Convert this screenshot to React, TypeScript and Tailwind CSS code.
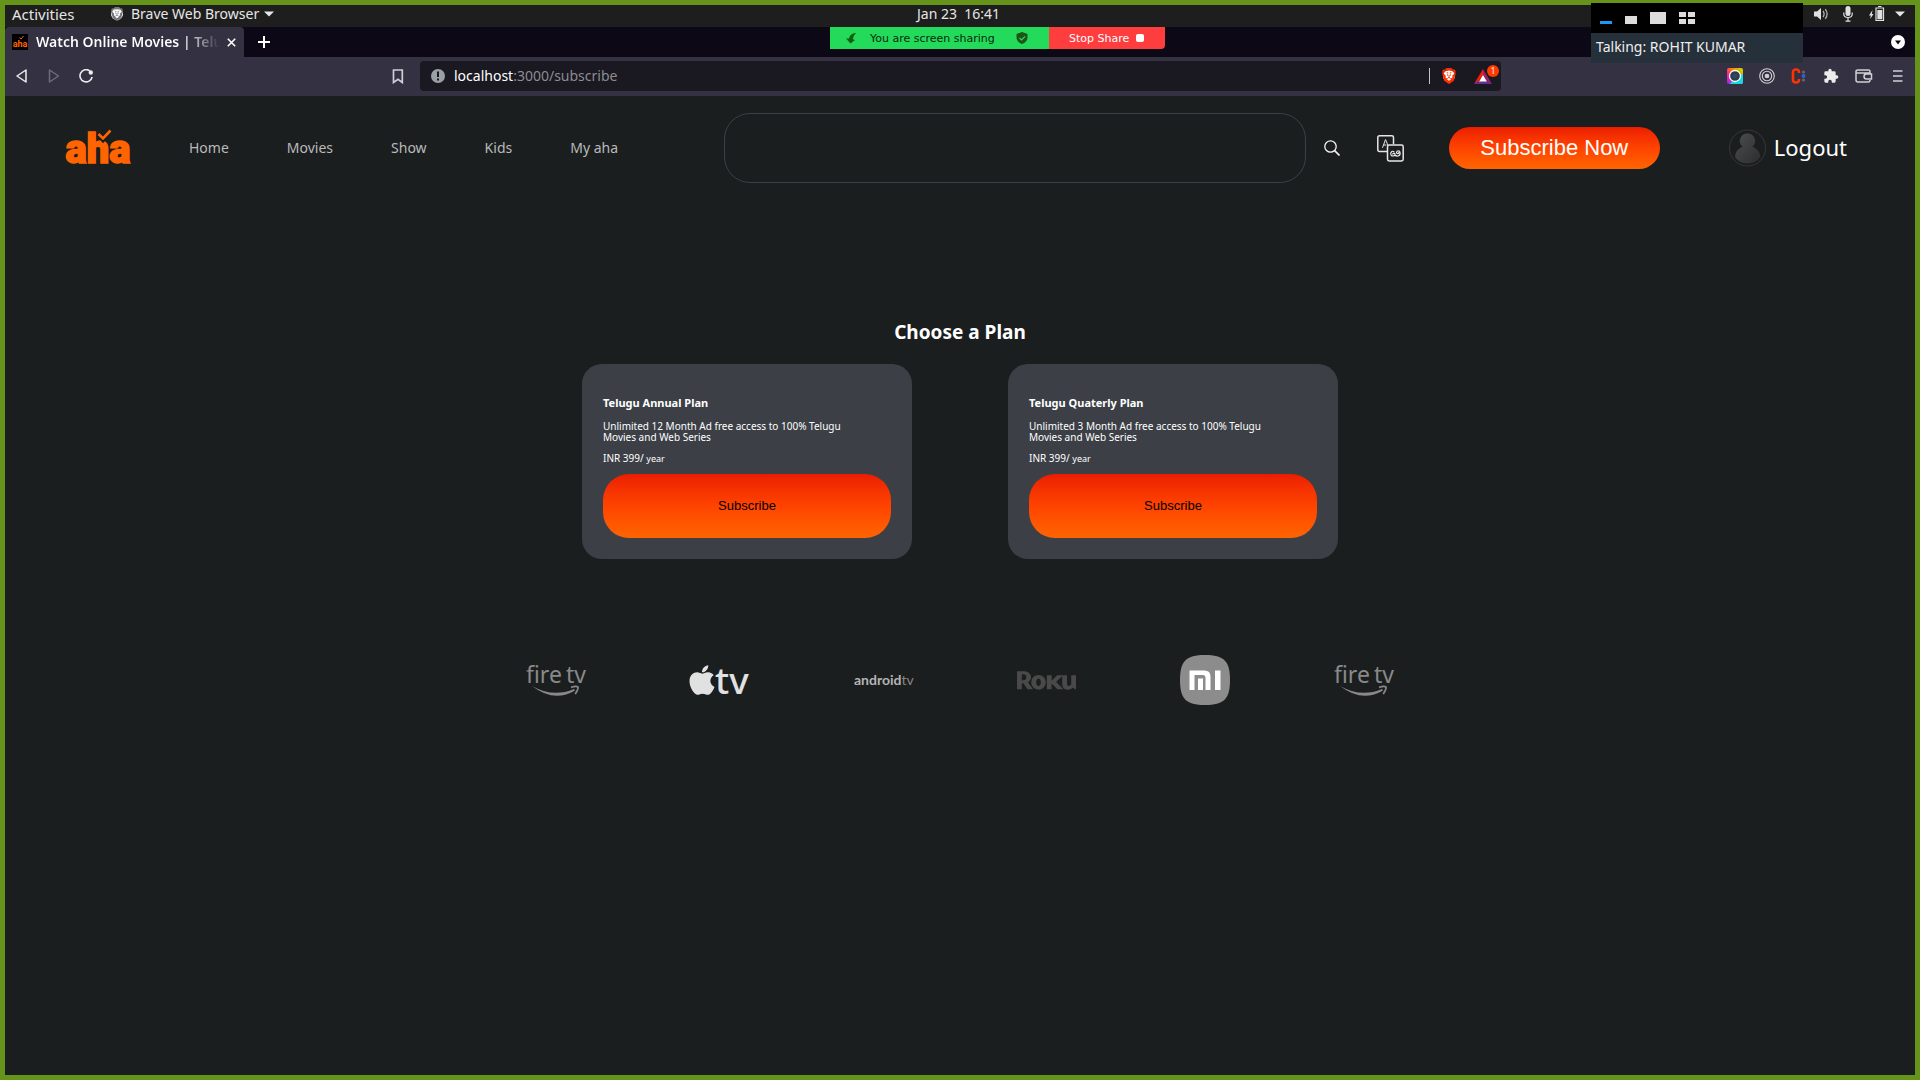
import React from 'react';
import { SiBrave, SiRoku } from 'react-icons/si';
import { FaApple } from 'react-icons/fa';

const BraveLion = ({ className }: { className: string }) => (
  <span className={`relative flex items-center justify-center ${className}`}>
    <span className="absolute h-3 w-3 rounded-full bg-white" />
    <SiBrave className="relative h-full w-full" />
  </span>
);

const Caret = () => (
  <svg width="10" height="6" viewBox="0 0 10 6" fill="#e6e6e6"><path d="M0 .5h10L5 5.500z" /></svg>
);

const AhaMark = ({ className }: { className: string }) => (
  <svg viewBox="0 0 66 34" className={`overflow-visible ${className}`} role="img" aria-label="aha">
    <text x="33" y="32" textAnchor="middle" fontFamily="Roboto, sans-serif" fontWeight="900" fontSize="40" fill="#ff6400" stroke="#ff6400" strokeWidth="1.500">aha</text>
    <path d="M33.500 3.500l4.500 5 7.500-8.500" fill="none" stroke="#1b1e1e" strokeWidth="5" />
    <path d="M33.500 3l4.500 4.500L45.500-.5" fill="none" stroke="#ff6400" strokeWidth="2.600" />
  </svg>
);

function SystemBar() {
  return (
    <div className="grid h-[22px] grid-cols-3 items-center bg-[#1e1e1e] pb-1 pl-[7px] pr-[10px] text-sm text-[#e6e6e6]">
      <div className="flex items-center">
        <button className="w-[98px] text-left text-[15px] leading-4">Activities</button>
        <BraveLion className="h-4 w-[14px] text-[#77777b]" />
        <button className="ml-[7px] flex items-center gap-[5px] leading-4">Brave Web Browser <Caret /></button>
      </div>
      <button className="justify-self-center whitespace-pre leading-4">Jan 23  16:41</button>
      <div className="flex items-center justify-end">
        <svg width="16" height="14" viewBox="0 0 16 14" fill="#e0e0e0" className="mr-[14px]">
          <path d="M1 4.500h3L8 1v12L4 9.500H1z" />
          <path d="M10 4q2.200 3 0 6M12.300 2.200q3.600 4.800 0 9.600" fill="none" stroke="#b0b0b0" strokeWidth="1.300" />
        </svg>
        <svg width="10" height="16" viewBox="0 0 10 16" fill="#e0e0e0" className="mr-4">
          <rect x="2.500" y="0" width="5" height="10" rx="2.500" />
          <path d="M.8 6.500v1.500q0 3.500 4.200 3.500t4.200-3.500V6.500M5 11.500v3.500M2.500 15.200h5" fill="none" stroke="#e0e0e0" strokeWidth="1.200" />
        </svg>
        <svg width="16" height="16" viewBox="0 0 16 16" fill="#e0e0e0" className="mr-[10px]">
          <path d="M3.500 4L0 9.500h1.800L1.200 13 4.500 8H2.800z" />
          <path d="M7 2h7.500v12.500H7zM9 .5h3.500" fill="none" stroke="#e0e0e0" strokeWidth="1.200" />
          <rect x="8.300" y="4" width="5" height="9.300" />
        </svg>
        <Caret />
      </div>
    </div>
  );
}

function TabStrip() {
  return (
    <div className="flex h-[30px] items-center bg-[#0d0815] pr-[10px]">
      <div className="flex h-full w-[239px] items-center rounded-t bg-[#343142] pl-[7px] pr-2">
        <span className="flex h-4 w-4 shrink-0 items-center bg-black">
          <svg viewBox="0 0 16 16" className="h-4 w-4 overflow-visible" aria-hidden="true">
            <text x="8" y="13" textAnchor="middle" fontFamily="Roboto, sans-serif" fontWeight="700" fontSize="9" fill="#ff6400">aha</text>
            <path d="M7.500 3.500l1.500 1.500 2.500-3" fill="none" stroke="#ff6400" />
          </svg>
        </span>
        <span className="ml-2 min-w-0 flex-1 overflow-hidden whitespace-nowrap bg-[linear-gradient(90deg,#fff_80%,transparent_100%)] bg-clip-text text-sm font-semibold text-transparent">Watch Online Movies | Telugu</span>
        <button aria-label="Close tab" className="ml-[7px] text-white">
          <svg width="9" height="9" viewBox="0 0 9 9" stroke="currentColor" strokeWidth="1.600"><path d="M.8.8l7.400 7.400M8.200.8L.8 8.200" /></svg>
        </button>
      </div>
      <button aria-label="New tab" className="ml-[14px] text-white">
        <svg width="12" height="12" viewBox="0 0 12 12" stroke="currentColor" strokeWidth="2"><path d="M6 0v12M0 6h12" /></svg>
      </button>
      <button aria-label="Search tabs" className="ml-auto">
        <svg width="14" height="14" viewBox="0 0 14 14"><circle cx="7" cy="7" r="7" fill="#fff" /><path d="M4 5.500h6L7 9.500z" fill="#0d0815" /></svg>
      </button>
    </div>
  );
}

function Toolbar() {
  return (
    <div className="flex h-[39px] items-center bg-[#343142] pb-px pl-[11px] pr-3">
      <button aria-label="Back"><svg width="12" height="14" viewBox="0 0 12 14" fill="none" stroke="#ececec" strokeWidth="1.500" strokeLinejoin="round"><path d="M10 1v12L1 7z" /></svg></button>
      <button aria-label="Forward" className="ml-5"><svg width="12" height="14" viewBox="0 0 12 14" fill="none" stroke="#6e6c7a" strokeWidth="1.500" strokeLinejoin="round"><path d="M1.500 1v12l9-6z" /></svg></button>
      <button aria-label="Reload" className="ml-[19px]">
        <svg width="14" height="14" viewBox="0 0 14 14"><path d="M10.800 1.900A6.100 6.100 0 1 0 13.100 8" fill="none" stroke="#ececec" strokeWidth="1.600" /><circle cx="11.800" cy="3.500" r="2.200" fill="#ececec" /></svg>
      </button>
      <button aria-label="Bookmark" className="ml-[299px]">
        <svg width="12" height="15" viewBox="0 0 12 15" fill="none" stroke="#cfced4" strokeWidth="1.700"><path d="M1.500 1h8.800v12.500L6 10.300l-4.500 3.200z" /></svg>
      </button>
      <div className="ml-4 mr-[226px] flex h-[30px] min-w-0 flex-1 items-center rounded bg-[#1a1821] pl-[11px] pr-[2px]">
        <svg width="14" height="14" viewBox="0 0 14 14"><circle cx="7" cy="7" r="7" fill="#9aa0a6" /><path d="M7 2.500v5.500M7 9.500v2" stroke="#1a1821" strokeWidth="2" /></svg>
        <span className="ml-[9px] flex-1 text-sm text-[#8d8c92]"><span className="text-white">localhost</span>:3000/subscribe</span>
        <span className="h-4 w-px bg-[#c4c4c8]" />
        <button aria-label="Brave Shields" className="ml-[11px]"><BraveLion className="h-[18px] w-4 text-[#fb3000]" /></button>
        <button aria-label="Brave Rewards" className="relative ml-[17px] h-5 w-[25px]">
          <svg width="25" height="20" viewBox="0 0 25 20">
            <path d="M9 3L0 18l4-2 5-7z" fill="#ff1a00" /><path d="M9 3l9 15-4-2-5-7z" fill="#9e1f63" /><path d="M0 18h18l-4-3H4z" fill="#662d91" /><path d="M9 9l4 6.500H5z" fill="#fff" />
          </svg>
          <span className="absolute -top-px right-0 h-3 w-3 rounded-full bg-[#ff3a00] text-center text-[8px] leading-3 text-white">1</span>
        </button>
      </div>
      <div className="flex items-center gap-4">
        <svg width="16" height="16" viewBox="0 0 16 16">
          <defs><linearGradient id="lens" x1="0" y1="1" x2="1" y2="0"><stop offset="0" stopColor="#8b2cff" /><stop offset=".35" stopColor="#ff1fa0" /><stop offset=".6" stopColor="#ff7a00" /><stop offset="1" stopColor="#b7f000" /></linearGradient></defs>
          <rect width="16" height="16" rx="2" fill="url(#lens)" /><path d="M16 6v8q0 2-2 2H3l5-8z" fill="#18d8e8" /><circle cx="8" cy="8" r="5.500" fill="#333c46" stroke="#fff" strokeWidth="1.300" /><circle cx="8" cy="8" r="2.200" fill="#1d5068" />
        </svg>
        <svg width="16" height="16" viewBox="0 0 16 16" fill="none" stroke="#d0d0d4" strokeWidth="1.100"><circle cx="8" cy="8" r="7.300" /><circle cx="8" cy="8" r="4.700" /><circle cx="8" cy="8" r="1.800" fill="#d0d0d4" /></svg>
        <svg width="16" height="16" viewBox="0 0 16 16"><path d="M8 5V4Q8 1.500 5 1.500T2 4v8q0 2.500 3 2.500T8 12v-1" fill="none" stroke="#ff3300" strokeWidth="2.600" /><circle cx="12.500" cy="4" r="1.600" fill="#666" /><circle cx="12.500" cy="8" r="1.900" fill="#2b62e0" /><circle cx="12.500" cy="12" r="1.600" fill="#666" /></svg>
        <svg width="16" height="16" viewBox="0 0 24 24" fill="#ececec"><path d="M20.500 11H19V7a2 2 0 0 0-2-2h-4V3.500a2.500 2.500 0 0 0-5 0V5H4a2 2 0 0 0-2 2v3.800h1.500a2.700 2.700 0 0 1 0 5.400H2V20a2 2 0 0 0 2 2h3.800v-1.500a2.700 2.700 0 0 1 5.400 0V22H17a2 2 0 0 0 2-2v-4h1.500a2.500 2.500 0 0 0 0-5z" /></svg>
        <svg width="18" height="14" viewBox="0 0 18 14" fill="none" stroke="#d0d0d4" strokeWidth="1.500"><path d="M15 4.500V2.500q0-1.500-1.500-1.500H3Q1 1 1 2.500v8.500q0 2 2 2h10q2 0 2-2M1.500 4H15M16.500 5h-5a2.500 2.500 0 0 0 0 5h5z" /></svg>
        <button aria-label="Menu" className="ml-1"><svg width="10" height="12" viewBox="0 0 10 12" stroke="#d0d0d4" strokeWidth="1.600"><path d="M0 1h9.500M0 6h9.500M0 11h9.500" /></svg></button>
      </div>
    </div>
  );
}

function ShareBar() {
  return (
    <div className="absolute left-1/2 top-[27px] flex h-[22px] w-[335px] -translate-x-[130px] font-['DejaVu_Sans',sans-serif] text-[11px]">
      <div className="flex w-[219px] items-center bg-[#24da5b] pl-4 text-[#062b0c]">
        <svg width="11" height="11" viewBox="0 0 11 11" fill="#12600f"><path d="M10.500 0Q4 0 3 5.500H0L4.500 10.500 9 7 7.200 6.500Q6.500 3 10.500 0z" /></svg>
        <span className="ml-[13px] flex-1 pt-[2px]">You are screen sharing</span>
        <svg width="12" height="12" viewBox="0 0 12 12" className="mr-[21px]"><path d="M6 0l5.500 2v4Q11 10 6 12 1 10 .5 6V2z" fill="#1d5417" /><path d="M3.500 6l2 2 3.500-3.500" fill="none" stroke="#24da5b" strokeWidth="1.200" /></svg>
      </div>
      <button className="flex flex-1 items-center rounded-br bg-[#fd3d3e] pl-5 text-white"><span className="pt-[2px]">Stop Share</span><span className="ml-[7px] h-2 w-2 rounded-xs bg-white" /></button>
    </div>
  );
}

function MeetingPanel() {
  return (
    <div className="absolute right-[117px] top-[3px] w-[212px]">
      <div className="flex h-[30px] items-end bg-black pb-[9px] pl-[9px]">
        <span className="h-[3px] w-3 bg-[#2196f3]" />
        <span className="ml-[13px] h-2 w-3 bg-[#dcdcdc]" />
        <span className="ml-[13px] h-3 w-4 bg-[#dcdcdc]" />
        <span className="ml-[13px] grid h-3 w-4 grid-cols-2 gap-[2px]">
          {[0, 1, 2, 3].map((n) => <span key={n} className="bg-[#dcdcdc]" />)}
        </span>
      </div>
      <div className="h-[30px] bg-[#25303a] pl-[5px] text-sm leading-7 text-[#eeeeee]">Talking: ROHIT KUMAR</div>
    </div>
  );
}

function SiteHeader() {
  return (
    <header className="flex items-center px-[60px] pt-[17px]">
      <a href="#"><AhaMark className="h-[34px] w-[66px]" /></a>
      <nav className="ml-[58px] flex gap-[58px] text-sm text-[#b9babb]">
        {['Home', 'Movies', 'Show', 'Kids', 'My aha'].map((t) => <a key={t} href="#" className="whitespace-nowrap">{t}</a>)}
      </nav>
      <input aria-label="Search" className="ml-[106px] h-[70px] min-w-0 flex-1 rounded-[26px] border border-[#3c3f46] bg-transparent px-6 text-white outline-none" />
      <button aria-label="Search" className="ml-[18px]">
        <svg width="16" height="16" viewBox="0 0 16 16" fill="none" stroke="#f2f2f2" strokeWidth="1.300"><circle cx="6.500" cy="6.500" r="5.700" /><path d="M10.600 10.600L15.500 15.500" strokeWidth="1.600" /></svg>
      </button>
      <button aria-label="Language" className="ml-[37px]">
        <svg width="27" height="27" viewBox="0 0 27 27" fill="none" stroke="#e6e6e6" strokeWidth="1.500">
          <path d="M10 16.500H2.500Q.8 16.500.8 14.800V2.500Q.8.8 2.500.8h12.300q1.700 0 1.700 1.700V9" />
          <rect x="10.500" y="10" width="15.700" height="16" rx="1.700" />
          <path d="M5.500 12.800L8.500 4.500l2.500 6M6.500 10h3" strokeWidth="1" />
          <path d="M17.500 17.200q-2.800-2.200-3.700.8-.3 3.200 2.500 3 2.400-.4 1.500-2.500-2.300-.3-2 1M18 20q1 1.200 2.800 1 2.500-.4 2.300-3-.5-3-3-1.700-1.300 1.500.2 2.200 1.700.3 1.700-1.500" strokeWidth="1.200" />
        </svg>
      </button>
      <button className="ml-[45px] h-[42px] w-[211px] rounded-full bg-linear-to-b from-[#eb1c00] via-[#ff4300] to-[#ff6400] pb-[2px] font-['Liberation_Sans',sans-serif] text-[22px] text-white">Subscribe Now</button>
      <button className="ml-[69px] mr-2 flex items-center gap-2 text-[22px] leading-7 text-white">
        <svg width="37" height="38" viewBox="0 0 37 38">
          <defs><linearGradient id="person" x1="0" y1="0" x2="1" y2="1"><stop offset="0" stopColor="#4b4d4e" /><stop offset="1" stopColor="#2b2d2e" /></linearGradient></defs>
          <circle cx="18.500" cy="19" r="18" fill="none" stroke="#35383b" />
          <path d="M18.500 4.500a7.500 7.500 0 0 1 5 13.200q7.500 3 7.800 10.300-4.500 6.500-12.800 6.500T6 28q.3-7.300 7.500-10.300a7.500 7.500 0 0 1 5-13.200z" fill="url(#person)" />
        </svg>
        <span className="pb-[2px]">Logout</span>
      </button>
    </header>
  );
}

function PlanCard({ name, months }: { name: string; months: number }) {
  return (
    <section className="w-[330px] rounded-[20px] bg-[#3c3f46] px-[21px] pb-[21px] pt-[31px] text-white">
      <h3 className="text-[11px] font-bold leading-4">{name}</h3>
      <p className="mt-[10px] w-[250px] text-[10px] leading-[11px]">{`Unlimited ${months} Month Ad free access to 100% Telugu Movies and Web Series`}</p>
      <p className="mt-[10px] text-[10px] leading-[11px]">INR 399/ <small className="text-[9px]">year</small></p>
      <button className="mt-[10px] h-16 w-full rounded-[26px] bg-linear-to-b from-[#eb1c00] via-[#ff4300] to-[#ff6400] font-['Liberation_Sans',sans-serif] text-[13px] text-black">Subscribe</button>
    </section>
  );
}

const FireTv = () => (
  <svg width="60" height="34" viewBox="0 0 60 34" className="overflow-visible" role="img" aria-label="fire tv" fill="#898989">
    <text x="0" y="20" fontFamily="'Noto Sans', sans-serif" fontSize="23">fire</text>
    <text x="40" y="20" fontFamily="'Noto Sans', sans-serif" fontSize="23">tv</text>
    <path d="M6 23q21 12 42 3l1 1.500Q28 40 6 23z" />
    <path d="M45 24.500q4.500-1.800 7-.6.500 2.500-2.800 7" fill="none" stroke="#898989" strokeWidth="1.700" />
  </svg>
);

const AppleTv = () => (
  <span className="flex w-[60px] items-center text-[#e1e1e1]">
    <FaApple className="-ml-px h-[34px] w-[26px] shrink-0" />
    <svg width="35" height="30" viewBox="0 0 35 30" className="shrink-0 overflow-visible" fill="#e1e1e1"><text x="0" y="29" fontFamily="'Noto Sans', sans-serif" fontSize="37" fontWeight="500">tv</text></svg>
  </span>
);

const AndroidTv = () => (
  <svg width="60" height="14" viewBox="0 0 60 14" className="overflow-visible" role="img" aria-label="android tv">
    <text x="0" y="12" fontFamily="Lato, sans-serif" fontSize="14" fontWeight="700" fill="#b4b4b4">android<tspan fontWeight="400" fill="#858585">tv</tspan></text>
  </svg>
);

const Mi = () => (
  <svg width="50" height="50" viewBox="0 0 50 50" role="img" aria-label="mi">
    <path d="M25 0C44 0 50 6 50 25S44 50 25 50 0 44 0 25 6 0 25 0z" fill="#8c8c8c" />
    <path d="M9.500 35V15.500h15q6 0 6 6V35h-5V22.500q0-2.500-2.500-2.500h-8.500v15zM18 23.500h5V35h-5zM35 15.500h5.500V35H35z" fill="#fff" />
  </svg>
);

export default function App() {
  return (
    <div className="relative flex min-h-screen flex-col border-[5px] border-[#66931a] bg-[#1b1e1e] font-['Noto_Sans',sans-serif]">
      <SystemBar />
      <TabStrip />
      <Toolbar />
      <SiteHeader />
      <main className="flex flex-col items-center pt-[135px]">
        <h1 className="text-[19px] font-bold leading-7 text-white">Choose a Plan</h1>
        <div className="mt-[18px] flex gap-24">
          <PlanCard name="Telugu Annual Plan" months={12} />
          <PlanCard name="Telugu Quaterly Plan" months={3} />
        </div>
        <div className="mt-[91px] flex h-[60px] w-[868px] items-center justify-between">
          <FireTv />
          <AppleTv />
          <AndroidTv />
          <SiRoku className="h-[59px] w-[59px] text-[#494949]" />
          <Mi />
          <FireTv />
        </div>
      </main>
      <div className="absolute inset-x-[-5px] top-[-5px]">
        <ShareBar />
        <MeetingPanel />
      </div>
    </div>
  );
}
